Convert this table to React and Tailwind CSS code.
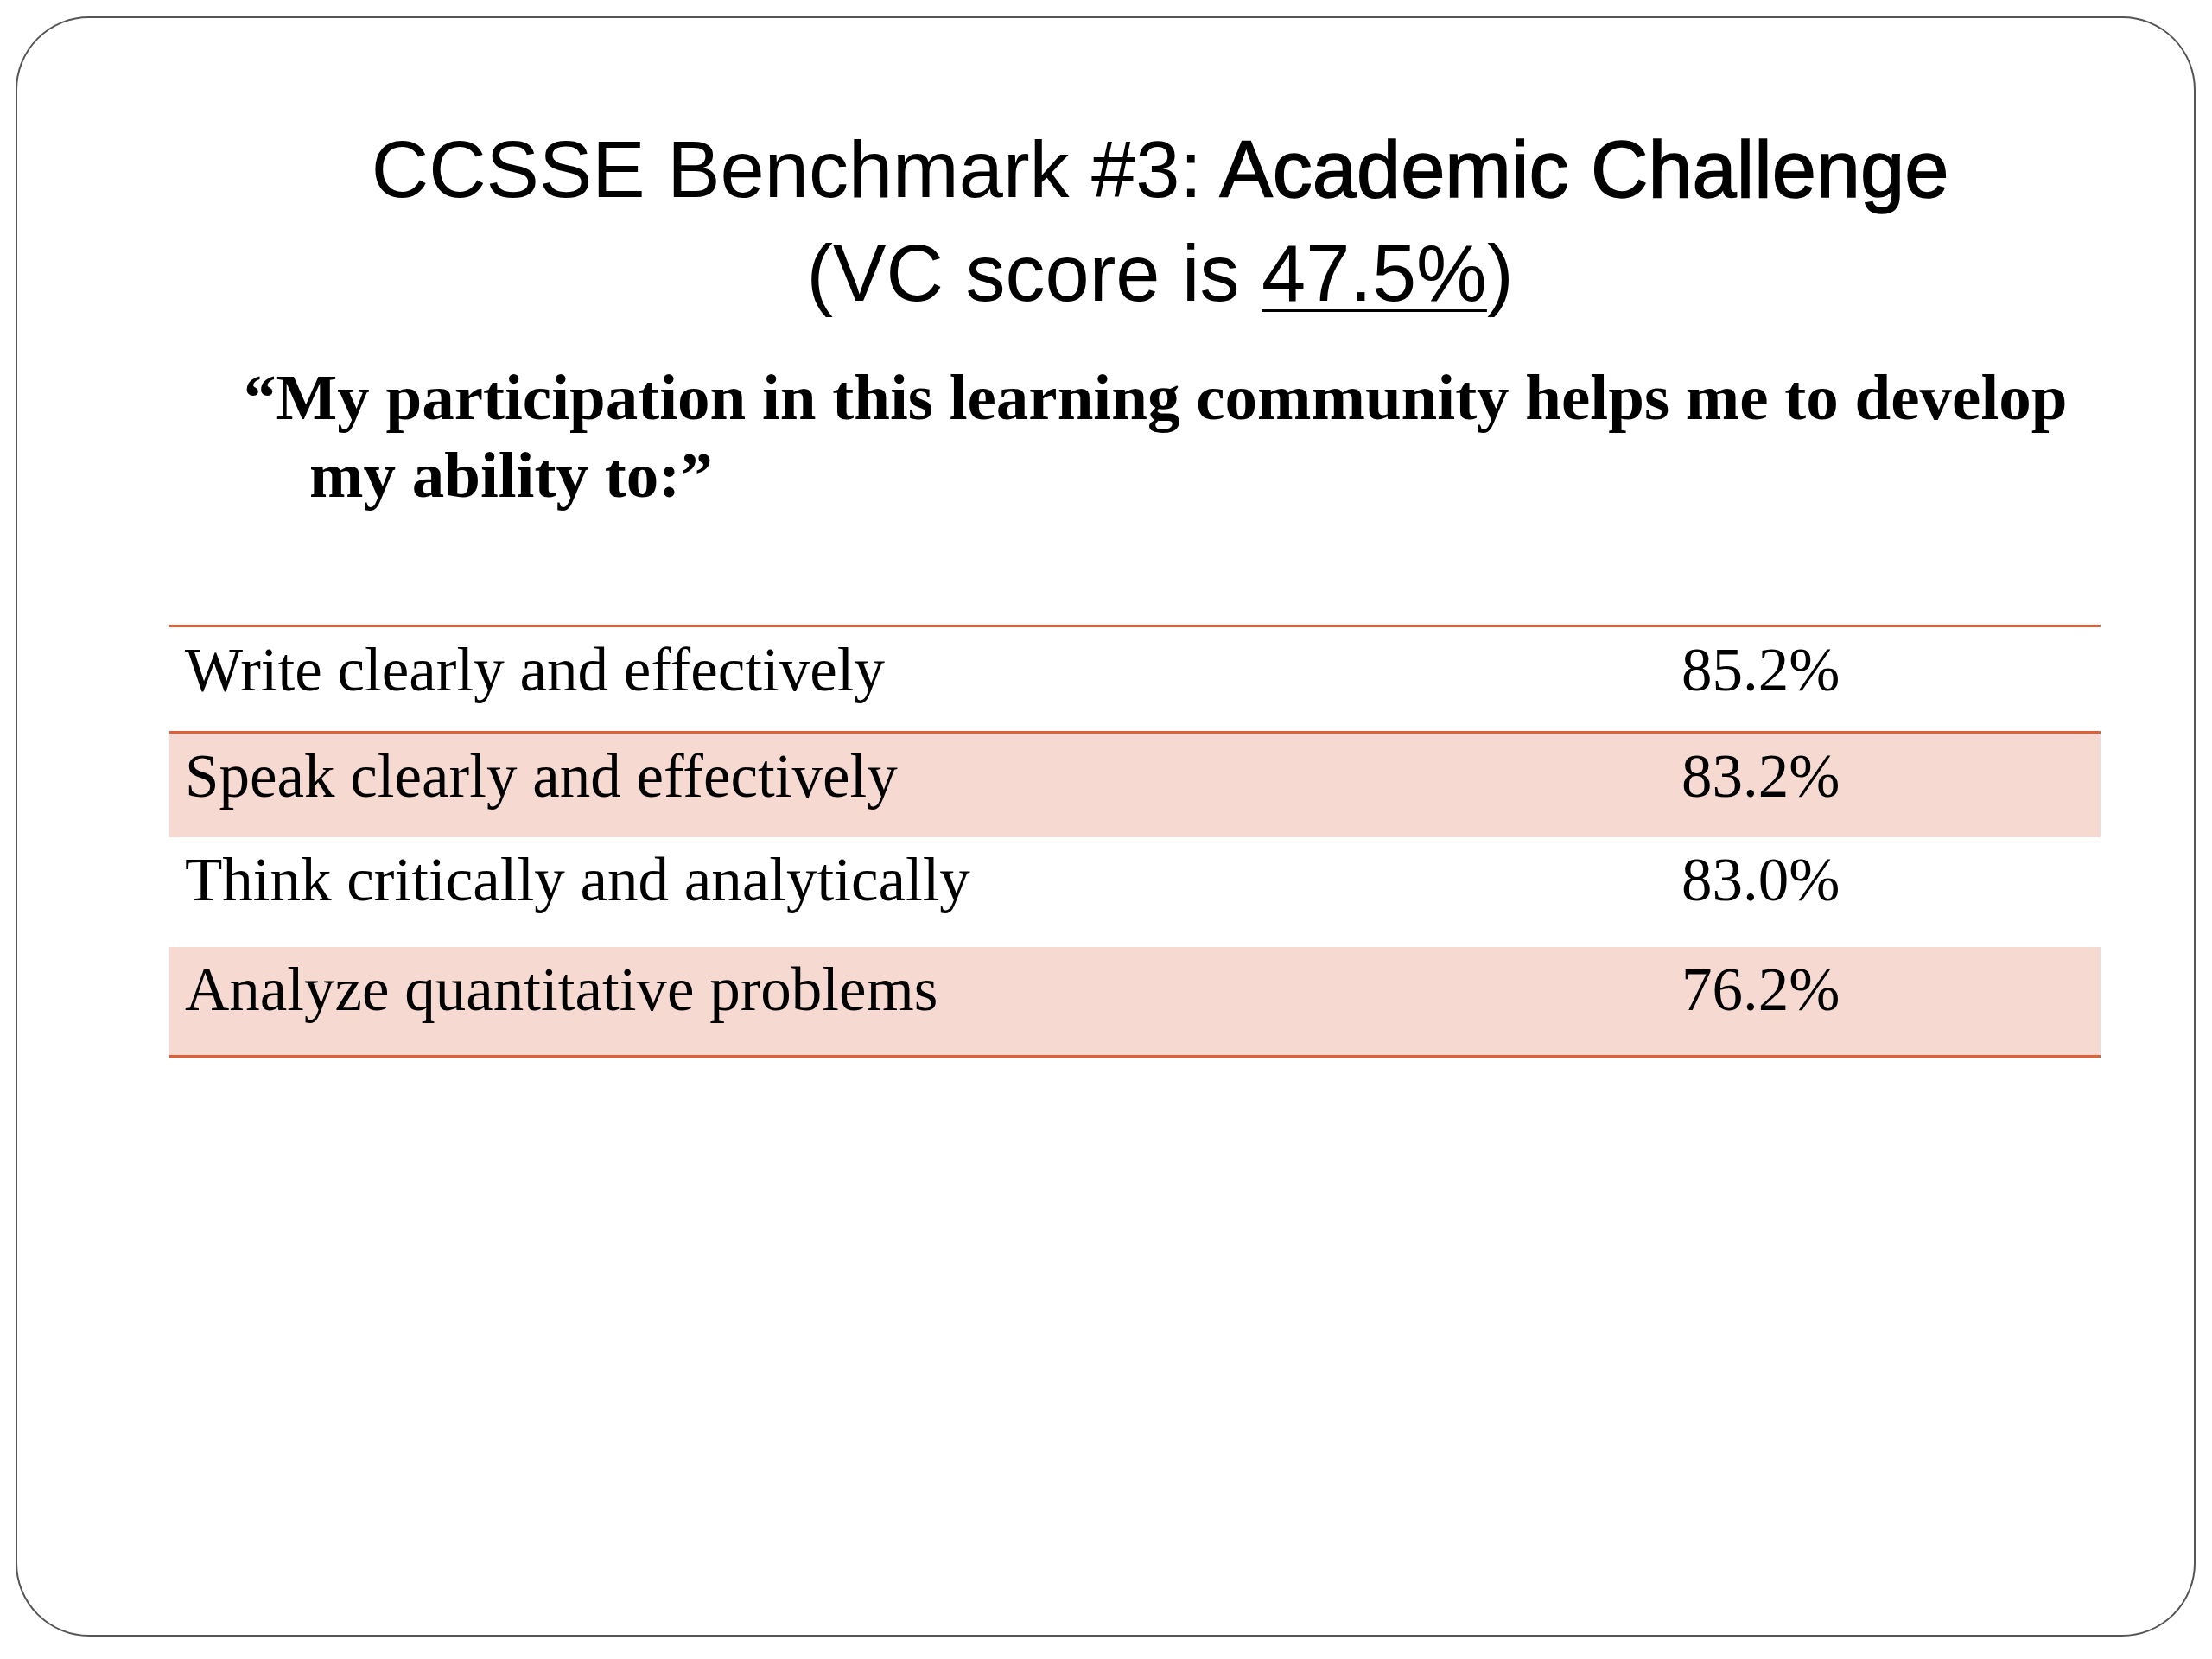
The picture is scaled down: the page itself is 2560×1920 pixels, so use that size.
const ROWS = [
  { label: 'Write clearly and effectively', value: '85.2%', shade: false, h: 'h-[123px]' },
  { label: 'Speak clearly and effectively', value: '83.2%', shade: true, h: 'h-[120px]' },
  { label: 'Think critically and analytically', value: '83.0%', shade: false, h: 'h-[127px]' },
  { label: 'Analyze quantitative problems', value: '76.2%', shade: true, h: 'h-[125px]' },
]

function Row({ label, value, shade, h, first }) {
  return (
    <div
      className={`grid grid-cols-[1750px_1fr] ${h} pt-[9px] text-[71px] leading-[80px] text-black
        ${shade ? 'bg-[#F6DAD2]' : 'bg-white'}
        ${first ? 'border-b-[3px] border-[#E0603A]' : ''}`}
    >
      <div className="pl-[18px] whitespace-nowrap">{label}</div>
      <div className="whitespace-nowrap">{value}</div>
    </div>
  )
}

export default function App() {
  return (
    <div className="w-[2560px] h-[1920px] bg-white pt-[19px] pl-[18px]">
      {/* slide frame */}
      <div className="w-[2523px] h-[1875px] border-2 border-[#555555] rounded-[85px] bg-white flex flex-col">
        {/* title */}
        <div
          className="mt-[115px] pl-[126px] text-center text-[92px] leading-[120px] text-black"
          style={{ fontFamily: '"Liberation Sans", Arial, sans-serif' }}
        >
          <p className="whitespace-nowrap">
            CCSSE Benchmark #3:{' '}
            <span className="[-webkit-text-stroke:1.5px_black]">Academic Challenge</span>
          </p>
          <p className="whitespace-nowrap">
            (VC score is{' '}
            <span className="underline decoration-[3px] underline-offset-[10px]">47.5%</span>)
          </p>
        </div>

        {/* question */}
        <p
          className="mt-[39px] ml-[338px] indent-[-76px] text-[75px] leading-[90px] font-bold text-black whitespace-nowrap"
          style={{ fontFamily: '"Liberation Serif", "Times New Roman", serif' }}
        >
          “My participation in this learning community helps me to develop
          <br />
          my ability to:”
        </p>

        {/* results table */}
        <div
          className="mt-[128px] ml-[176px] w-[2235px] border-t-[3px] border-b-[3px] border-[#E0603A]"
          style={{ fontFamily: '"Liberation Serif", "Times New Roman", serif' }}
        >
          {ROWS.map((r, i) => (
            <Row key={r.label} {...r} first={i === 0} />
          ))}
        </div>
      </div>
    </div>
  )
}
